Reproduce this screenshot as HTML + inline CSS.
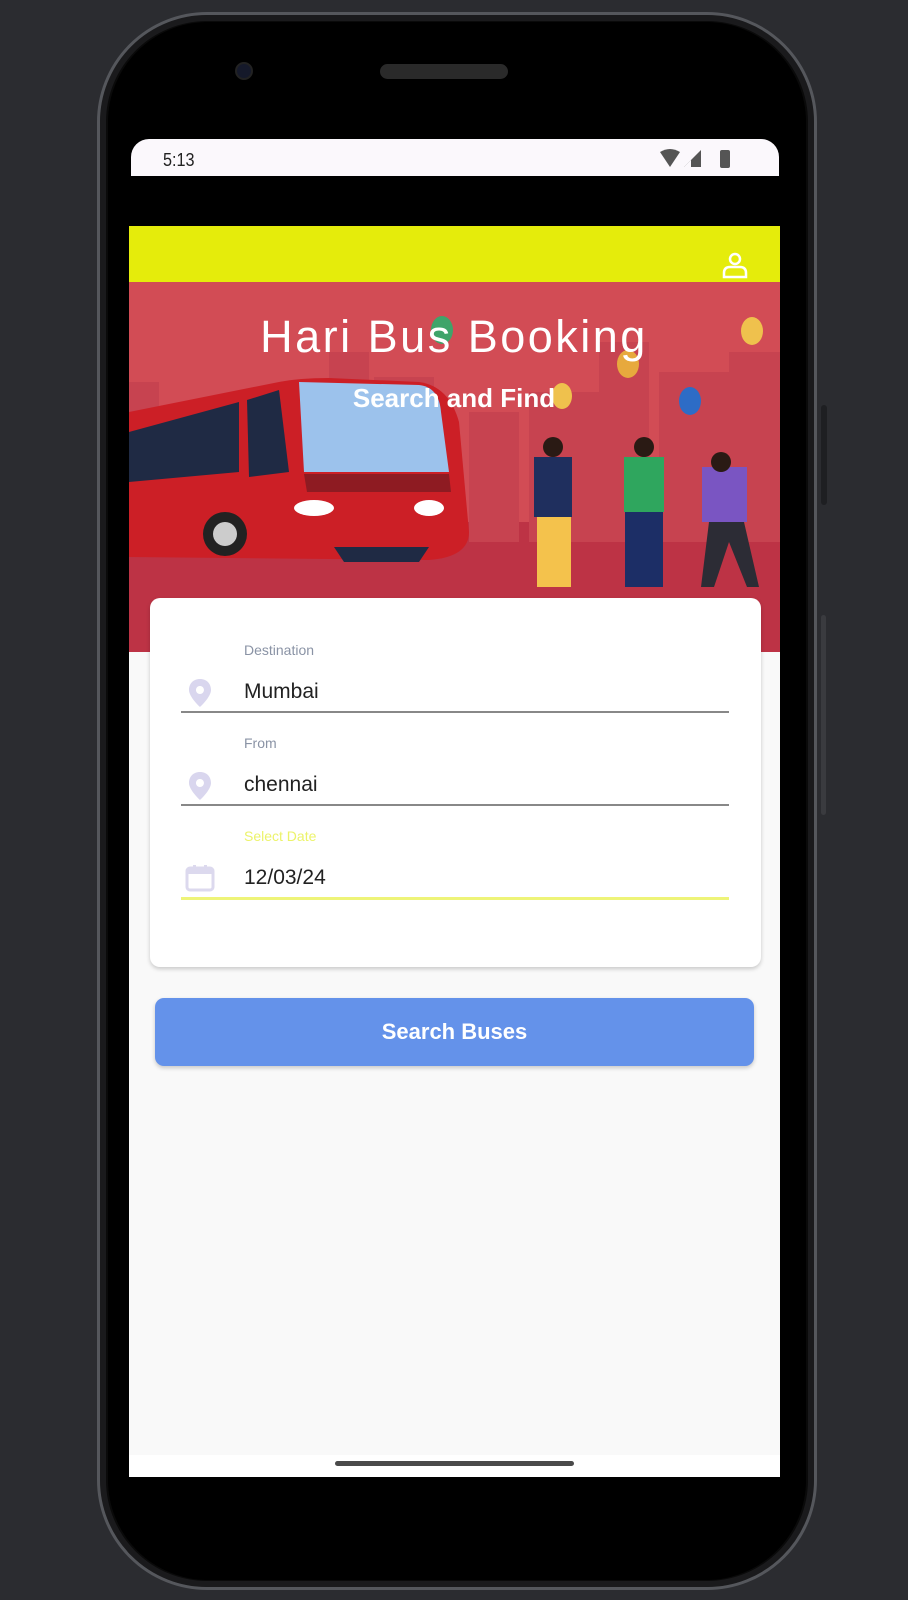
<!DOCTYPE html>
<html><head><meta charset="utf-8">
<style>
*{margin:0;padding:0;box-sizing:border-box}
html,body{width:908px;height:1600px;overflow:hidden;background:#2b2c30;font-family:"Liberation Sans",sans-serif}
.abs{position:absolute}
</style></head><body>
<div class="abs" style="left:97px;top:12px;width:720px;height:1578px;border-radius:110px;background:#0a0a0a;border:3px solid #55575c;box-shadow:inset 0 0 0 6px #1a1a1c"></div>
<div class="abs" style="left:108px;top:22px;width:698px;height:1558px;border-radius:100px;background:#000"></div>
<div class="abs" style="left:821px;top:405px;width:6px;height:100px;background:#1e1f22;border-radius:3px"></div>
<div class="abs" style="left:821px;top:615px;width:5px;height:200px;background:#3a3b3f;border-radius:3px"></div>
<div class="abs" style="left:235px;top:62px;width:18px;height:18px;border-radius:50%;background:#15192a;border:2px solid #222"></div>
<div class="abs" style="left:380px;top:64px;width:128px;height:15px;border-radius:8px;background:#2a2a2a"></div>
<div class="abs" style="left:131px;top:139px;width:648px;height:37px;background:#fbf8fc;border-radius:18px 18px 0 0"></div>
<div class="abs" style="left:163px;top:150px;font-size:18px;color:#222;transform:scaleX(.9);transform-origin:left">5:13</div>
<svg class="abs" style="left:658px;top:148px" width="75" height="22" viewBox="0 0 75 22">
<path d="M2 4 Q12 -2 22 4 L12 19 Z" fill="#555"/>
<path d="M26 19 L43 19 L43 2 Z" fill="#555"/><path d="M33 19 L33 12 L26 19Z" fill="#fbf8fc"/>
<rect x="62" y="2" width="10" height="18" rx="2" fill="#555"/>
</svg>
<div class="abs" style="left:129px;top:176px;width:651px;height:50px;background:#000"></div>
<div class="abs" style="left:129px;top:226px;width:651px;height:56px;background:#e5ec0b"></div>
<svg class="abs" style="left:720px;top:252px" width="30" height="28" viewBox="0 0 30 28">
<circle cx="15" cy="7" r="5" fill="none" stroke="#fff" stroke-width="2.5"/>
<path d="M4 25 L4 21 Q4 15 10 15 L20 15 Q26 15 26 21 L26 25 Z" fill="none" stroke="#fff" stroke-width="2.5"/>
</svg>
<svg class="abs" style="left:129px;top:282px" width="651" height="370" viewBox="0 0 651 370">
<rect width="651" height="370" fill="#d24c55"/>
<rect y="240" width="651" height="130" fill="#bd3345"/>
<g fill="#c74350">
<rect x="0" y="100" width="30" height="160"/><rect x="200" y="70" width="40" height="190"/><rect x="245" y="95" width="60" height="170"/>
<rect x="340" y="130" width="50" height="130"/><rect x="400" y="110" width="70" height="150"/><rect x="470" y="60" width="50" height="200"/><rect x="530" y="90" width="70" height="170"/><rect x="600" y="70" width="51" height="190"/>
</g>
<path d="M0 130 L150 100 Q170 96 200 96 L290 100 Q320 104 330 140 L340 250 Q340 275 300 278 L0 275 Z" fill="#cc1f26"/>
<path d="M0 150 L110 120 L110 190 L0 200Z" fill="#1f2a44"/>
<path d="M118 118 L150 108 L160 190 L120 195Z" fill="#1f2a44"/>
<path d="M170 100 L290 103 Q310 105 312 130 L320 190 L175 190 Z" fill="#9cc2ec"/>
<path d="M175 192 L320 192 L322 210 L178 210Z" fill="#8e1b22"/>
<ellipse cx="185" cy="226" rx="20" ry="8" fill="#fff"/><ellipse cx="300" cy="226" rx="15" ry="8" fill="#fff"/>
<path d="M205 265 L300 265 L290 280 L215 280Z" fill="#1f2a44"/>
<circle cx="96" cy="252" r="22" fill="#222"/><circle cx="96" cy="252" r="12" fill="#ccc"/>
<rect x="405" y="175" width="38" height="60" fill="#1f2f5e"/><rect x="408" y="235" width="34" height="70" fill="#f4c24c"/><circle cx="424" cy="165" r="10" fill="#2a1a14"/>
<rect x="495" y="175" width="40" height="55" fill="#2fa65e"/><rect x="496" y="230" width="38" height="75" fill="#1c2e66"/><circle cx="515" cy="165" r="10" fill="#2a1a14"/>
<rect x="573" y="185" width="45" height="55" fill="#7a55c2"/><path d="M580 240 L615 240 L630 305 L618 305 L600 260 L585 305 L572 305Z" fill="#2c2c35"/><circle cx="592" cy="180" r="10" fill="#2a1a14"/>
<ellipse cx="313" cy="48" rx="11" ry="14" fill="#3fa46a"/><ellipse cx="499" cy="82" rx="11" ry="14" fill="#e7a93d"/><ellipse cx="561" cy="119" rx="11" ry="14" fill="#2d6cc6"/><ellipse cx="623" cy="49" rx="11" ry="14" fill="#efc14d"/><ellipse cx="433" cy="114" rx="10" ry="13" fill="#efc14d"/>
<text x="325" y="70" text-anchor="middle" font-family="Liberation Sans" font-size="45" fill="#fff" letter-spacing="2.5">Hari Bus Booking</text>
<text x="325" y="125" text-anchor="middle" font-family="Liberation Sans" font-size="26" font-weight="bold" fill="#fff">Search and Find</text>
</svg>
<div class="abs" style="left:129px;top:652px;width:651px;height:803px;background:#f9f9f9"></div>
<div class="abs" style="left:129px;top:1455px;width:651px;height:22px;background:#fff"></div>
<div class="abs" style="left:335px;top:1461px;width:239px;height:5px;border-radius:3px;background:#4a4a4a"></div>
<div class="abs" style="left:150px;top:598px;width:611px;height:369px;background:#fff;border-radius:10px;box-shadow:0 2px 4px rgba(0,0,0,.2)"></div>
<div class="abs" style="left:244px;top:642px;font-size:14px;color:#8a93a5">Destination</div>
<div class="abs" style="left:244px;top:680px;font-size:21px;color:#222">Mumbai</div>
<div class="abs" style="left:181px;top:711px;width:548px;height:2px;background:#888"></div>
<div class="abs" style="left:244px;top:735px;font-size:14px;color:#8a93a5">From</div>
<div class="abs" style="left:244px;top:773px;font-size:21px;color:#222">chennai</div>
<div class="abs" style="left:181px;top:804px;width:548px;height:2px;background:#888"></div>
<div class="abs" style="left:244px;top:828px;font-size:14px;color:#ecf36a">Select Date</div>
<div class="abs" style="left:244px;top:866px;font-size:21px;color:#222">12/03/24</div>
<div class="abs" style="left:181px;top:897px;width:548px;height:3px;background:#eef478"></div>
<svg class="abs" style="left:188px;top:678px" width="24" height="30" viewBox="0 0 24 30"><path d="M12 1 C5 1 1 6 1 12 C1 19 12 29 12 29 C12 29 23 19 23 12 C23 6 19 1 12 1Z M12 8 A4 4 0 1 1 11.9 8Z" fill="#d9d6ee" fill-rule="evenodd"/></svg>
<svg class="abs" style="left:188px;top:771px" width="24" height="30" viewBox="0 0 24 30"><path d="M12 1 C5 1 1 6 1 12 C1 19 12 29 12 29 C12 29 23 19 23 12 C23 6 19 1 12 1Z M12 8 A4 4 0 1 1 11.9 8Z" fill="#d9d6ee" fill-rule="evenodd"/></svg>
<svg class="abs" style="left:185px;top:864px" width="30" height="28" viewBox="0 0 30 28"><rect x="2" y="4" width="26" height="22" rx="3" fill="none" stroke="#dcd9ee" stroke-width="3"/><rect x="2" y="4" width="26" height="6" fill="#dcd9ee"/><rect x="8" y="1" width="3" height="5" fill="#dcd9ee"/><rect x="19" y="1" width="3" height="5" fill="#dcd9ee"/></svg>
<div class="abs" style="left:155px;top:998px;width:599px;height:68px;background:#6492ea;border-radius:9px;box-shadow:0 2px 4px rgba(0,0,0,.2);color:#fff;font-size:22px;font-weight:bold;text-align:center;line-height:68px">Search Buses</div>
</body></html>
